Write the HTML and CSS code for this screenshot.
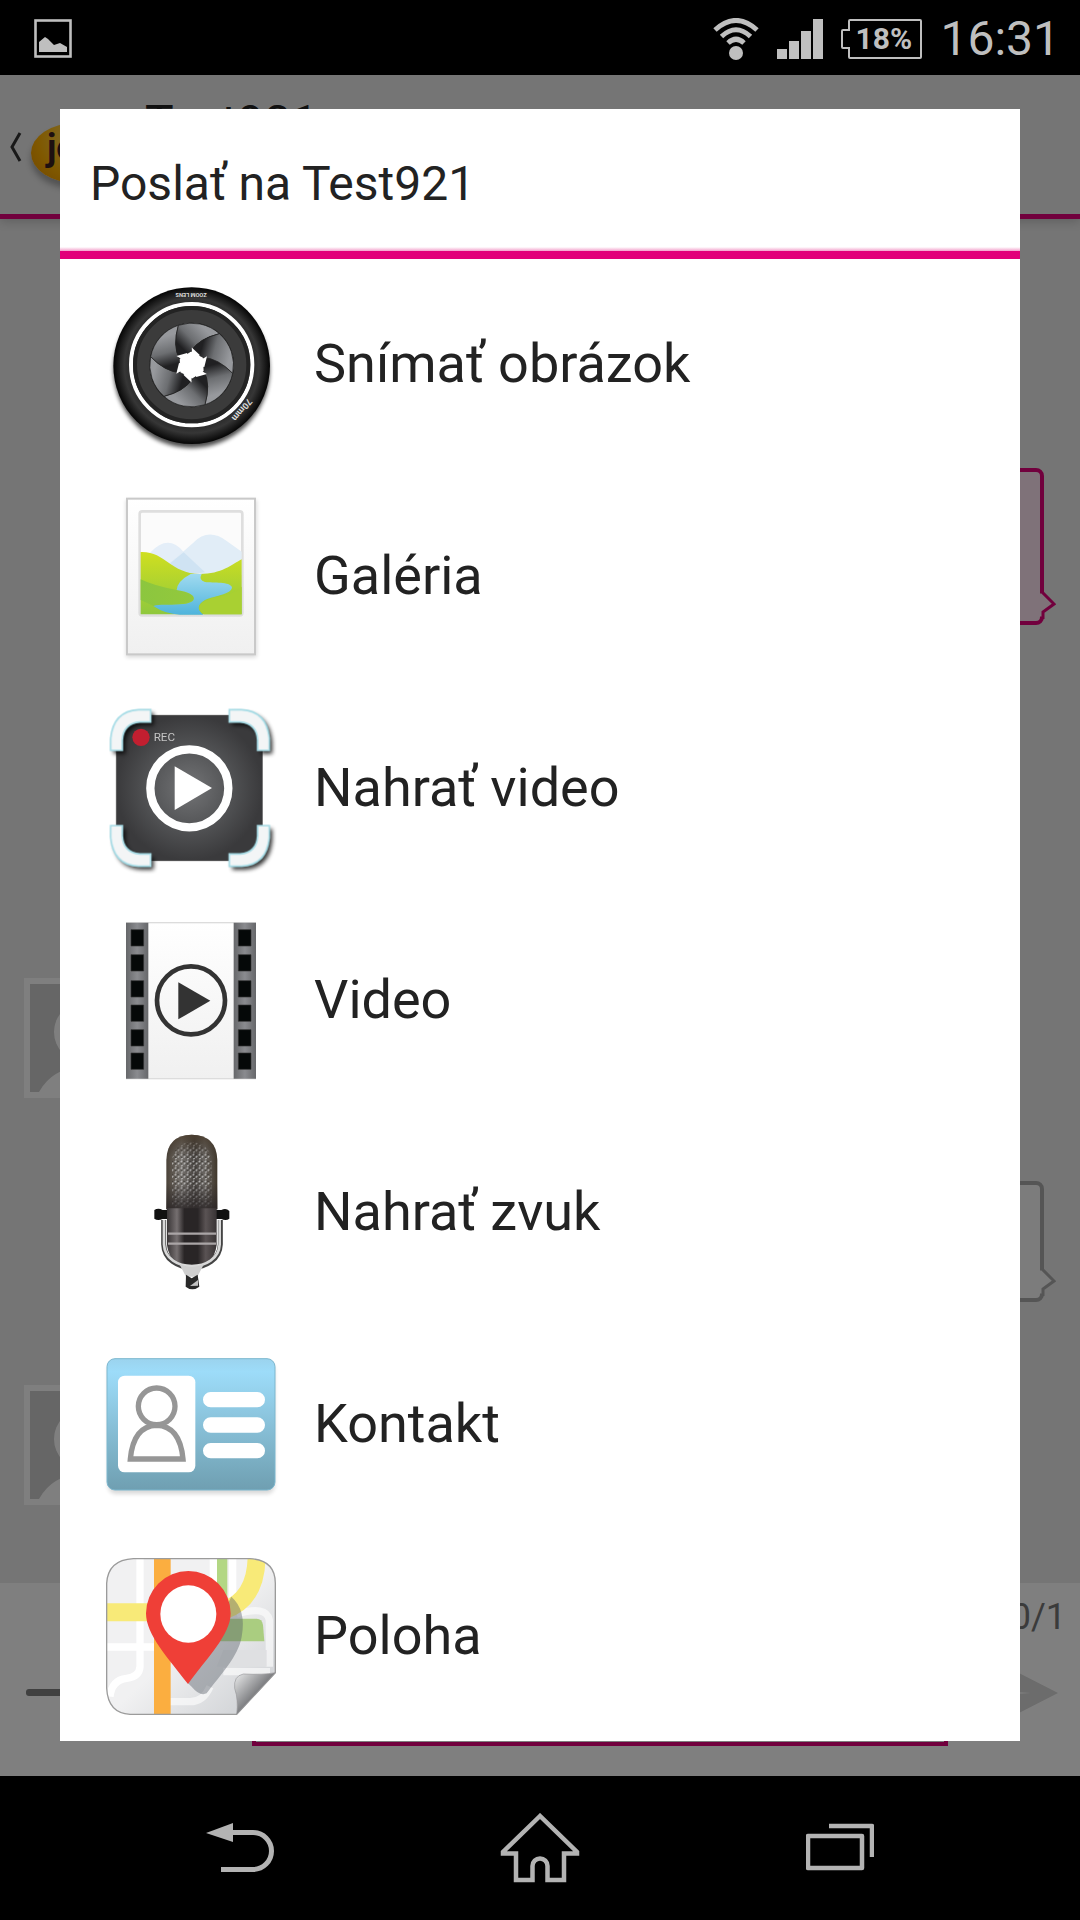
FILE: index.html
```html
<!DOCTYPE html>
<html lang="sk">
<head>
  <meta charset="UTF-8" />
  <title>Poslať na Test921</title>
  <meta name="viewport" content="width=device-width, initial-scale=1.0" />
  <link rel="stylesheet" href="styles.css">
</head>
<body>
  <div class="screen">
    <header class="status-bar">
      <svg class="status-picture" width="38" height="40" viewBox="0 0 38 40">
        <rect x="1.5" y="1.5" width="35" height="36" fill="none" stroke="#bfbfbf" stroke-width="2.6" />
        <path d="M5 23l6-5 3 2 6 6 6-2 7 4v5H5z" fill="#bfbfbf" />
      </svg>
      <div class="status-right">
        <svg class="wifi" width="46" height="42" viewBox="0 0 46 42">
          <g fill="none" stroke="#bfbfbf" stroke-width="5">
            <path d="M2 12Q23-7 44 12" />
            <path d="M8.500 18.500Q23 5 37.500 18.500" />
            <path d="M15 25Q23 17.500 31 25" />
          </g>
          <circle cx="23" cy="35" r="7" fill="#bfbfbf" />
        </svg>
        <svg class="signal" width="46" height="40" viewBox="0 0 46 40" fill="#bfbfbf">
          <path d="M0 30h10v10H0zM12 22h10v18H12zM24 12h10v28H24zM36 0h10v40H36z" />
        </svg>
        <div class="battery">
          <svg width="81" height="40" viewBox="0 0 81 40">
            <path d="M9 1H79Q80 1 80 2V38Q80 39 79 39H9Q8 39 8 38V29H2Q1 29 1 28V12Q1 11 2 11H8V2Q8 1 9 1Z" fill="none" stroke="#bfbfbf" stroke-width="2" />
          </svg>
          <span>18%</span>
        </div>
        <time class="clock">16:31</time>
      </div>
    </header>

    <main class="stage">
      <div class="app" inert>
        <div class="app-header">
          <button class="back" aria-label="Späť">
            <svg width="12" height="30" viewBox="0 0 12 30"><path d="M10 1L2 15l8 14" fill="none" stroke="#333" stroke-width="3" /></svg>
          </button>
          <div class="logo">jo</div>
          <h1 class="contact-name">Test921</h1>
          <svg class="call" width="40" height="66" viewBox="0 0 40 66"><circle cx="20" cy="33" r="32" fill="#e2007a" /></svg>
        </div>

        <div class="chat">
          <div class="bubble bubble-pink">
            <svg class="tail" width="16" height="28" viewBox="0 0 16 28"><path d="M0 1L2 1 14 13 3 21V27H0" /></svg>
          </div>
          <div class="avatar avatar-late">
            <svg width="108" height="108" viewBox="0 0 108 108"><circle cx="54" cy="48" r="30" /><path d="M9 108Q22 84 54 82 86 84 99 108Z" /></svg>
          </div>
          <div class="bubble bubble-small">
            <svg class="tail" width="16" height="28" viewBox="0 0 16 28"><path d="M0 1L2 1 14 13 3 21V27H0" /></svg>
          </div>
          <div class="avatar">
            <svg width="108" height="108" viewBox="0 0 108 108"><circle cx="54" cy="48" r="30" /><path d="M9 108Q22 84 54 82 86 84 99 108Z" /></svg>
          </div>
        </div>

        <div class="composer">
          <button class="menu" aria-label="Menu"><span></span></button>
          <input class="message" type="text" aria-label="Správa" />
          <div class="send-box">
            <span class="counter">0/1</span>
            <button class="send" aria-label="Odoslať">
              <svg width="68" height="70" viewBox="0 0 68 70"><path d="M0 0L68 35 0 70V38L41 35 0 32Z" fill="#d8d8d8" /></svg>
            </button>
          </div>
        </div>
      </div>

      <div class="scrim">
        <section class="dialog" role="dialog" aria-labelledby="dialogTitle">
          <h2 class="dialog-title" id="dialogTitle">Poslať na Test921</h2>
          <ul class="options">
            <li>
              <button class="option">
                <svg class="option-icon" viewBox="48 45 510 480">
                  <defs>
                    <radialGradient id="lensBody" cx="50%" cy="50%" r="50%">
                      <stop offset=".72" stop-color="#222" />
                      <stop offset=".86" stop-color="#363636" />
                      <stop offset="1" stop-color="#050505" />
                    </radialGradient>
                    <linearGradient id="blade" gradientUnits="userSpaceOnUse" x1="60" y1="-10" x2="85" y2="85">
                      <stop offset=".1" stop-color="#202022" />
                      <stop offset=".5" stop-color="#6c6e71" />
                      <stop offset="1" stop-color="#97999d" />
                    </linearGradient>
                    <filter id="soft" x="-20%" y="-20%" width="140%" height="140%"><feGaussianBlur stdDeviation="7" /></filter>
                    <path id="bladeShape" d="M123 25Q80-20 35-23L37 19Q57 59 40 119A125 125 0 0 0 123 25Z" fill="url(#blade)" stroke="#222" stroke-width="2" />
                    <path id="spike" d="M0 0L46-26 38 6Z" fill="#fff" />
                  </defs>
                  <circle cx="305" cy="300" r="234" fill="#000" opacity=".7" filter="url(#soft)" />
                  <circle cx="305" cy="287" r="235" fill="url(#lensBody)" />
                  <circle cx="305" cy="284" r="182" fill="#3b3b3b" stroke="#fff" stroke-width="12" />
                  <circle cx="305" cy="284" r="170" fill="none" stroke="#232323" stroke-width="12" />
                  <circle cx="305" cy="285" r="127" fill="#161616" />
                  <circle cx="305" cy="285" r="45" fill="#fff" />
                  <g transform="translate(305 285)">
                    <use href="#bladeShape" />
                    <use href="#bladeShape" transform="rotate(60)" />
                    <use href="#bladeShape" transform="rotate(120)" />
                    <use href="#bladeShape" transform="rotate(180)" />
                    <use href="#bladeShape" transform="rotate(240)" />
                    <use href="#bladeShape" transform="rotate(300)" />
                    <use href="#spike" />
                    <use href="#spike" transform="rotate(60)" />
                    <use href="#spike" transform="rotate(120)" />
                    <use href="#spike" transform="rotate(180)" />
                    <use href="#spike" transform="rotate(240)" />
                    <use href="#spike" transform="rotate(300)" />
                  </g>
                  <text class="lens-text" font-size="17" transform="translate(350 70) rotate(180)">ZOOM LENS</text>
                  <text class="lens-text" font-size="27" transform="translate(474 384) rotate(130)">70mm</text>
                </svg>
                <span>Snímať obrázok</span>
              </button>
            </li>
            <li>
              <button class="option">
                <svg class="option-icon" viewBox="48 51 510 480">
                  <defs>
                    <linearGradient id="paper" x1="0" y1="0" x2="0" y2="1"><stop offset="0" stop-color="#fff" /><stop offset="1" stop-color="#f0f0f0" /></linearGradient>
                    <linearGradient id="grass" x1="0" y1="0" x2="0" y2="1"><stop offset="0" stop-color="#d0df20" /><stop offset="1" stop-color="#8fc83d" /></linearGradient>
                    <linearGradient id="river" x1="0" y1="0" x2="0" y2="1"><stop offset="0" stop-color="#a0daf0" /><stop offset="1" stop-color="#4fb4dc" /></linearGradient>
                    <linearGradient id="hill" x1="0" y1="0" x2="1" y2="0"><stop offset="0" stop-color="#8cc63f" /><stop offset="1" stop-color="#93c93c" /></linearGradient>
                  </defs>
                  <rect x="108" y="60" width="392" height="472" fill="#000" opacity=".15" filter="url(#soft)" />
                  <rect x="111" y="56" width="384" height="467" fill="url(#paper)" stroke="#c9c9c9" stroke-width="6" />
                  <rect x="149" y="94" width="308" height="312" rx="8" fill="#fbfbfb" stroke="#dedede" stroke-width="8" />
                  <path d="M180 218Q235 160 280 215L345 275 230 285Z" fill="#e4eef8" />
                  <path d="M240 250L310 188Q355 142 410 183L455 215V285H270Z" fill="#e1edf7" />
                  <path d="M240 250L281 217 345 277 285 285Z" fill="#cfe3f3" />
                  <path d="M152 216C225 213 240 280 330 282C395 282 425 254 455 238V403H152Z" fill="url(#grass)" />
                  <path d="M152 298Q190 317 260 330Q312 340 312 356 310 372 190 378L152 360Z" fill="url(#hill)" />
                  <path d="M302 282Q262 303 260 330C330 340 325 371 270 373C235 376 210 372 190 378Q225 402 270 404H340Q310 380 345 360C380 346 425 343 426 322C420 304 370 309 345 306Q325 300 335 282Z" fill="url(#river)" />
                  <path d="M455 320Q430 345 370 353 320 366 328 390 334 400 342 403H455Z" fill="#a9d032" />
                </svg>
                <span>Galéria</span>
              </button>
            </li>
            <li>
              <button class="option">
                <svg class="option-icon" viewBox="48 57 510 480">
                  <defs>
                    <radialGradient id="recBody"><stop offset="0" stop-color="#737476" /><stop offset=".6" stop-color="#505153" /><stop offset="1" stop-color="#3a3a3c" /></radialGradient>
                    <path id="corner" d="M62 181V145Q70 63 145 59H182V96H150Q100 100 97 150V181Z" />
                  </defs>
                  <rect x="79" y="76" width="438" height="436" rx="42" fill="url(#recBody)" stroke="#444" stroke-width="2" />
                  <g opacity=".8" filter="url(#soft)" transform="translate(9 10)">
                    <use href="#corner" /><use href="#corner" transform="translate(600 0) scale(-1 1)" />
                    <use href="#corner" transform="translate(0 588) scale(1 -1)" /><use href="#corner" transform="translate(600 588) scale(-1 -1)" />
                  </g>
                  <g fill="#f3f5f6" stroke="#a6dce6" stroke-width="5">
                    <use href="#corner" /><use href="#corner" transform="translate(600 0) scale(-1 1)" />
                    <use href="#corner" transform="translate(0 588) scale(1 -1)" /><use href="#corner" transform="translate(600 588) scale(-1 -1)" />
                  </g>
                  <circle cx="153" cy="142" r="26" fill="#c21f30" />
                  <text class="rec-text" x="191" y="154" font-size="35">REC</text>
                  <circle cx="298" cy="295" r="117" fill="none" stroke="#fff" stroke-width="25" />
                  <path d="M254 229L366 294 254 360Z" fill="#fff" />
                </svg>
                <span>Nahrať video</span>
              </button>
            </li>
            <li>
              <button class="option">
                <svg class="option-icon" viewBox="48 48 510 480">
                  <defs>
                    <linearGradient id="strip" x1="0" y1="0" x2="1" y2="0"><stop offset="0" stop-color="#66676a" /><stop offset=".5" stop-color="#8a8b8f" /><stop offset="1" stop-color="#66676a" /></linearGradient>
                  </defs>
                  <rect x="110" y="53" width="386" height="468" fill="url(#paper)" stroke="#dcdcdc" stroke-width="4" />
                  <path d="M108 53H175V521H108z" fill="url(#strip)" />
                  <path d="M431 53H498V521H431z" fill="url(#strip)" />
                  <path d="M123 74h38v49h-38zM123 149h38v49h-38zM123 227h38v49h-38zM123 300h38v49h-38zM123 374h38v49h-38zM123 444h38v49h-38zM445 74h38v49h-38zM445 149h38v49h-38zM445 227h38v49h-38zM445 300h38v49h-38zM445 374h38v49h-38zM445 444h38v49h-38z" fill="#050808" stroke="#333" stroke-width="2" />
                  <circle cx="303" cy="286" r="102" fill="none" stroke="#333" stroke-width="14" />
                  <path d="M265 232L361 287 265 343Z" fill="#333" />
                </svg>
                <span>Video</span>
              </button>
            </li>
            <li>
              <button class="option">
                <svg class="option-icon" viewBox="48 39 510 480">
                  <defs>
                    <linearGradient id="micHead" x1="0" y1="0" x2="1" y2="0"><stop offset="0" stop-color="#4a4238" /><stop offset=".3" stop-color="#77736f" /><stop offset=".55" stop-color="#474340" /><stop offset=".75" stop-color="#6b6763" /><stop offset="1" stop-color="#40372b" /></linearGradient>
                    <linearGradient id="micBody" x1="0" y1="0" x2="1" y2="0"><stop offset="0" stop-color="#393536" /><stop offset=".2" stop-color="#756f70" /><stop offset=".35" stop-color="#292526" /><stop offset=".62" stop-color="#292526" /><stop offset=".78" stop-color="#5a5354" /><stop offset="1" stop-color="#383334" /></linearGradient>
                    <linearGradient id="micTop" x1="0" y1="0" x2="0" y2="1"><stop offset="0" stop-color="#4a3c2c" stop-opacity=".85" /><stop offset=".3" stop-color="#332a20" stop-opacity="0" /><stop offset=".65" stop-color="#2a2526" stop-opacity="0" /><stop offset="1" stop-color="#2a2526" stop-opacity=".85" /></linearGradient>
                    <pattern id="mesh" width="18" height="20" patternUnits="userSpaceOnUse">
                      <path d="M2 6l5-4M11 13l5-5M4 18l4-4" stroke="#cfcfcf" stroke-width="4" />
                      <path d="M10 3l4 2M2 11l5 2" stroke="#292622" stroke-width="3" />
                    </pattern>
                  </defs>
                  <path d="M229 268V120Q231 46 305 44 380 46 382 120V268Z" fill="url(#micHead)" />
                  <path d="M246 262V125Q250 68 305 66 360 68 364 125V262Z" fill="url(#mesh)" opacity=".75" />
                  <path d="M229 268V120Q231 46 305 44 380 46 382 120V268Z" fill="url(#micTop)" />
                  <path d="M193 270Q205 262 218 270H394Q408 262 418 273V296Q408 304 394 297H218Q203 303 193 296Z" fill="#111" />
                  <path d="M231 265H380V375Q371 442 305 443 240 440 231 375Z" fill="url(#micBody)" />
                  <path d="M234 341H378M234 371H378" stroke="#aaa5a6" stroke-width="7" />
                  <path d="M221 300V373C224 465 387 465 391 373V300" fill="none" stroke="#444" stroke-width="15" />
                  <path d="M222 300V373C226 460 385 460 389 373V300" fill="none" stroke="#d8d8d8" stroke-width="8" />
                  <path d="M268 432Q305 450 342 432L322 470H288Z" fill="#cfcfcf" />
                  <path d="M288 464L305 475 323 464 328 500Q307 516 287 500Z" fill="#282828" />
                  <path d="M300 498L324 480V497Z" fill="#c2c2c2" />
                </svg>
                <span>Nahrať zvuk</span>
              </button>
            </li>
            <li>
              <button class="option">
                <svg class="option-icon" viewBox="48 15 510 480">
                  <defs>
                    <linearGradient id="card" x1="0" y1="0" x2="0" y2="1"><stop offset="0" stop-color="#9bd3ee" /><stop offset=".1" stop-color="#9ddcf9" /><stop offset="1" stop-color="#6f9fb1" /></linearGradient>
                  </defs>
                  <rect x="54" y="68" width="500" height="394" rx="24" fill="#000" opacity=".15" filter="url(#soft)" />
                  <rect x="51" y="56" width="504" height="394" rx="24" fill="url(#card)" stroke="#7db7ce" stroke-width="3" />
                  <rect x="84" y="107" width="232" height="290" rx="20" fill="#fff" />
                  <g fill="none" stroke="#969696" stroke-width="16">
                    <circle cx="200" cy="199" r="55" />
                    <path d="M121 357Q130 258 200 256 270 258 279 357Z" />
                  </g>
                  <path d="M362 179H502M362 255H502M362 332H502" stroke="#fff" stroke-width="46" stroke-linecap="round" />
                </svg>
                <span>Kontakt</span>
              </button>
            </li>
            <li>
              <button class="option">
                <svg class="option-icon" viewBox="48 51 510 480">
                  <defs>
                    <linearGradient id="mapPaper" x1="0" y1="0" x2="1" y2="1"><stop offset=".5" stop-color="#f1f1f2" /><stop offset=".85" stop-color="#d5d7da" /></linearGradient>
                    <linearGradient id="fold" gradientUnits="userSpaceOnUse" x1="440" y1="410" x2="500" y2="465"><stop offset="0" stop-color="#dedfe0" /><stop offset="1" stop-color="#77787b" /></linearGradient>
                    <clipPath id="mapClip"><path d="M130 56H480Q556 60 556 130V398L440 523H120Q54 520 50 445V130Q54 60 130 56Z" /></clipPath>
                  </defs>
                  <g clip-path="url(#mapClip)">
                    <path d="M48 50H560V530H48Z" fill="url(#mapPaper)" />
                    <g fill="none" stroke="#fff" stroke-width="22">
                      <path d="M150 50V380Q148 410 110 415 65 420 60 470M48 321H200M370 50V170M428 50V190" />
                      <path d="M240 485H300Q340 485 360 440M400 395H540M440 222Q530 195 538 240V380" opacity=".6" />
                    </g>
                    <path d="M400 330H530V380H380Z" fill="#dfe0e2" />
                    <path d="M381 50H412V180H381Z" fill="#b3d784" />
                    <path d="M410 236H500Q516 236 519 255L523 304H380Z" fill="#aacd80" />
                    <path d="M48 217H200M500 50Q498 180 400 212" fill="none" stroke="#f8ea78" stroke-width="54" />
                    <path d="M192 50H242V530H192Z" fill="#fbae40" />
                  </g>
                  <path d="M130 56H480Q556 60 556 130V398L440 523H120Q54 520 50 445V130Q54 60 130 56Z" fill="none" stroke="#9b9b9b" stroke-width="4" />
                  <path d="M424 170Q470 210 455 290C445 350 390 405 350 460Q330 470 305 440L294 430Z" fill="#555d66" opacity=".42" />
                  <path d="M556 398L440 523Q446 480 434 445 430 408 460 402 520 405 556 398Z" fill="url(#fold)" stroke="#98999b" stroke-width="2" />
                  <path d="M294 432C235 355 168 285 168 220A127 127 0 0 1 422 220C422 285 350 355 294 432Z" fill="#ef3f37" />
                  <ellipse cx="295" cy="222" rx="84" ry="86" fill="#fff" />
                </svg>
                <span>Poloha</span>
              </button>
            </li>
          </ul>
        </section>
      </div>
    </main>

    <nav class="nav-bar">
      <button aria-label="Späť">
        <svg width="68" height="70" viewBox="0 -10 68 70">
          <path d="M0 10L27 0V19Z" fill="#b3b3b3" />
          <path d="M25 9.500H47A18.500 18.500 0 0 1 47 46.500H15" fill="none" stroke="#b3b3b3" stroke-width="5" />
        </svg>
      </button>
      <button aria-label="Domov">
        <svg width="80" height="70" viewBox="0 0 80 70"><path d="M40 3L3 39V40.500H16V67H32.500V53A7.500 7.500 0 0 1 47.500 53V67H64V40.500H77V39Z" fill="none" stroke="#b3b3b3" stroke-width="4.500" /></svg>
      </button>
      <button aria-label="Posledné aplikácie">
        <svg width="68" height="70" viewBox="0 -11 68 70"><path d="M2 12H56V44H2ZM23 2H66V33" fill="none" stroke="#b3b3b3" stroke-width="4.500" stroke-linejoin="round" /></svg>
      </button>
    </nav>
  </div>
</body>
</html>
```
FILE: styles.css
```css
:root {
  --accent: #e2007a;
  --status: #bfbfbf;
  --text-color: #222;
  --app-bg: #eaeaea;
}

* {
  box-sizing: border-box;
}

body {
  margin: 0;
  font-family: Roboto, 'Noto Sans', sans-serif;
  background: #000;
  color: var(--text-color);
}

button {
  padding: 0;
  border: none;
  background: none;
  color: inherit;
  font: inherit;
  cursor: pointer;
}

svg {
  display: block;
  flex-shrink: 0;
}

.screen {
  display: grid;
  grid-template-rows: 75px 1fr 144px;
  height: 100vh;
}

/* status bar */
.status-bar {
  display: flex;
  justify-content: space-between;
  align-items: center;
  padding: 2px 20px 0 34px;
  color: var(--status);
}

.status-right {
  display: flex;
  align-items: center;
  gap: 18px;
}

.battery {
  display: grid;
  align-items: center;
}

.battery svg,
.battery span {
  grid-area: 1 / 1;
}

.battery span {
  padding-left: 14px;
  font-size: 30px;
  font-weight: bold;
  line-height: 40px;
}

.clock {
  font-size: 48px;
  line-height: 56px;
}

/* conversation behind the dialog */
.stage {
  position: relative;
  min-height: 0;
}

.app {
  display: flex;
  flex-direction: column;
  height: 100%;
  background: var(--app-bg);
}

.app-header {
  display: flex;
  align-items: flex-start;
  height: 144px;
  padding: 24px 246px 0 10px;
  border-bottom: 5px solid var(--accent);
  box-shadow: 0 2px 10px rgba(0, 0, 0, 0.2);
}

.back {
  margin: 33px 9px 0 0;
}

.logo {
  width: 90px;
  height: 60px;
  margin: 24px 24px 0 0;
  padding-left: 16px;
  border-radius: 50%;
  background: radial-gradient(ellipse at 50% 25%, #ffdf60, #ffb000 60%, #e08a00);
  box-shadow: 0 6px 6px rgba(0, 0, 0, 0.3);
  color: #3a2020;
  font-size: 36px;
  font-weight: bold;
  line-height: 50px;
}

.contact-name {
  flex: 1;
  margin: 0;
  font-size: 48px;
  font-weight: normal;
  line-height: 48px;
}

.call {
  margin-top: 9px;
}

.chat {
  flex: 1;
  display: flex;
  flex-direction: column;
  justify-content: flex-end;
  gap: 83px;
  padding: 0 36px 78px 24px;
}

.bubble {
  --line: #aaa;
  --fill: #f8f8f8;
  position: relative;
  align-self: flex-end;
  width: 60%;
  height: 121px;
  border: 4px solid var(--line);
  border-radius: 8px;
  background: var(--fill);
}

.bubble-pink {
  --line: var(--accent);
  --fill: #ffe4f2;
  height: 157px;
}

.tail {
  position: absolute;
  right: -16px;
  bottom: 2px;
  fill: var(--fill);
  stroke: var(--line);
  stroke-width: 3;
}

.avatar {
  width: 120px;
  height: 120px;
  border: 6px solid #fff;
  background: #ccc;
}

.avatar-late {
  margin-top: 270px;
}

.avatar svg {
  fill: #fff;
}

.composer {
  display: flex;
  align-items: flex-end;
  height: 193px;
  padding: 0 18px 30px 26px;
  background: #fff;
}

.menu {
  width: 226px;
  height: 66px;
}

.menu span {
  display: block;
  width: 60px;
  height: 7px;
  margin-bottom: 42px;
  border-radius: 3px;
  background: #808080;
}

.message {
  flex: 1;
  height: 120px;
  border: 4px solid var(--accent);
  background: #fff;
  font-size: 48px;
}

.send-box {
  display: flex;
  flex-direction: column;
  align-items: flex-end;
  gap: 20px;
  width: 114px;
  padding-bottom: 18px;
}

.counter {
  margin-right: -4px;
  color: #777;
  font-size: 36px;
  line-height: 42px;
}

.send {
  margin-right: 4px;
}

/* dialog */
.scrim {
  position: absolute;
  inset: 0;
  display: flex;
  padding: 34px 60px 35px;
  background: rgba(0, 0, 0, 0.5);
}

.dialog {
  flex: 1;
  display: flex;
  flex-direction: column;
  background: #fff;
}

.dialog-title {
  margin: 0;
  padding: 47px 30px 39px;
  border-bottom: 8px solid var(--accent);
  background: linear-gradient(to top, #f3a0cb, #fff 4px);
  font-size: 48px;
  font-weight: normal;
  line-height: 56px;
}

.options {
  flex: 1;
  min-height: 0;
  margin: 0;
  padding: 0;
  list-style: none;
  overflow-y: auto;
  scrollbar-width: none;
}

.option {
  display: flex;
  align-items: center;
  gap: 38px;
  width: 100%;
  height: 212px;
  padding: 0 46px;
  font-size: 54px;
  line-height: 64px;
  text-align: left;
}

.option span {
  padding-bottom: 2px;
}

.option-icon {
  width: 170px;
  height: 160px;
  overflow: visible;
}

.lens-text {
  fill: #ddd;
  font-weight: bold;
}

.rec-text {
  fill: #c4c4c4;
}

/* navigation bar */
.nav-bar {
  display: grid;
  grid-template-columns: repeat(3, 1fr);
  padding: 0 90px;
}

.nav-bar button {
  display: flex;
  align-items: center;
  justify-content: center;
}
```
